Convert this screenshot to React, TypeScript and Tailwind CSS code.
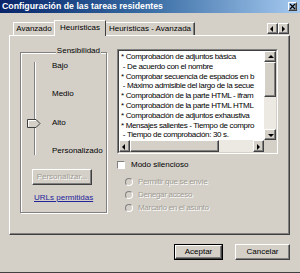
import React from 'react'

const listLines = [
  '* Comprobación de adjuntos básica',
  ' - De acuerdo con el nombre',
  '* Comprobar secuencia de espacios en b',
  ' - Máximo admisible del largo de la secue',
  '* Comprobación de la parte HTML - ifram',
  '* Comprobación de la parte HTML HTML',
  '* Comprobación de adjuntos exhaustiva',
  '* Mensajes salientes - Tiempo de compro',
  ' - Tiempo de comprobación: 30 s.',
]

const raised =
  'border border-t-white border-l-white border-r-[#404040] border-b-[#404040] shadow-[inset_-1px_-1px_0_#808080]'

function ArrowBtn({ dir, className = '' }: { dir: 'left' | 'right' | 'up' | 'down'; className?: string }) {
  const pts = {
    left: '5,2 5,8 2,5',
    right: '3,2 3,8 6,5',
    up: '2,6 8,6 5,3',
    down: '2,4 8,4 5,7',
  }[dir]
  return (
    <div className={`bg-[#d4d0c8] flex items-center justify-center ${raised} ${className}`}>
      <svg width="9" height="9" viewBox="0 0 9 9">
        <polygon points={pts} fill="#000" />
      </svg>
    </div>
  )
}

function Radio({ label }: { label: string }) {
  return (
    <div className="flex items-center gap-[5px] h-[13px]">
      <div className="w-[8px] h-[8px] rounded-full border border-t-[#808080] border-l-[#808080] border-r-white border-b-white bg-[#d4d0c8]" />
      <span className="text-[8px] tracking-[-0.3px] text-[#a09c94] [text-shadow:1px_1px_0_#fff]">{label}</span>
    </div>
  )
}

export default function App() {
  return (
    <div
      className="w-[300px] h-[273px] bg-[#d4d0c8] flex flex-col overflow-hidden text-black border-b border-b-[#404040]"
      style={{ fontFamily: '"Liberation Sans", Arial, sans-serif' }}
    >
      {/* title bar */}
      <div className="h-[13px] shrink-0 flex items-center justify-between pl-[2px] pr-[3px] bg-gradient-to-r from-[#0a246a] via-[#3a6ea5] to-[#a6caf0]">
        <span className="text-[8.75px] font-bold text-white leading-none">Configuración de las tareas residentes</span>
        <div className={`w-[9px] h-[9px] flex items-center justify-center ${raised}`}>
          <svg width="7" height="7" viewBox="0 0 7 7">
            <path d="M1 1 L6 6 M6 1 L1 6" stroke="#000" strokeWidth="1.2" />
          </svg>
        </div>
      </div>

      {/* tabs */}
      <div className="mt-[7px] h-[15px] flex items-end pl-[13px] pr-[11px] text-[8px]">
        <div className="h-[13px] px-[2px] w-[41px] flex items-center justify-center border-t border-l border-t-white border-l-white">
          Avanzado
        </div>
        <div className="relative z-10 -mb-[1px] h-[16px] w-[52px] flex items-center justify-center border-t border-l border-r border-t-white border-l-white border-r-[#404040] bg-[#d4d0c8] pb-[2px]">
          Heurísticas
        </div>
        <div className="h-[13px] w-[89px] flex items-center justify-center border-t border-r border-t-white border-r-[#404040] shadow-[inset_-1px_0_0_#808080]">
          Heurísticas - Avanzada
        </div>
        <div className="ml-auto mb-[1px] flex">
          <ArrowBtn dir="left" className="w-[11px] h-[11px]" />
          <ArrowBtn dir="right" className="w-[11px] h-[11px]" />
        </div>
      </div>

      {/* panel */}
      <div className="ml-[9px] w-[281px] h-[200px] shrink-0 flex border border-t-white border-l-white border-r-[#404040] border-b-[#404040] shadow-[inset_-1px_-1px_0_#808080] text-[8px]">
        {/* Sensibilidad group */}
        <div className="ml-[10px] mt-[16px] w-[87px] h-[161px] relative border border-[#808080] shadow-[1px_1px_0_#fff,inset_1px_1px_0_#fff] flex flex-col">
          <span className="absolute -top-[6px] right-[5px] px-[1px] bg-[#d4d0c8] leading-none">Sensibilidad</span>
          <div className="flex mt-[9px] h-[94px]">
            <div className="w-[31px] relative flex justify-center">
              <div className="w-[2px] h-[93px] ml-[-3px] border-l border-l-[#808080] border-r border-r-white" />
              <svg className="absolute left-[6px] top-[57px]" width="14" height="10" viewBox="0 0 14 10">
                <polygon points="0.5,0.5 9,0.5 13,4.5 9,8.5 0.5,8.5" fill="#d4d0c8" stroke="#404040" strokeWidth="1" />
                <polyline points="1.5,7.5 1.5,1.5 9,1.5" fill="none" stroke="#fff" strokeWidth="1" />
              </svg>
            </div>
            <div className="flex flex-col justify-between leading-[10px] -mt-[1px]">
              <span>Bajo</span>
              <span>Medio</span>
              <span>Alto</span>
              <span>Personalizado</span>
            </div>
          </div>
          <div
            className={`ml-[11px] mt-[13px] w-[60px] h-[16px] flex items-center justify-center text-[#a09c94] [text-shadow:1px_1px_0_#fff] ${raised}`}
          >
            Personalizar...
          </div>
          <span className="ml-[13px] mt-[9px] text-[#24249a] underline leading-none">URLs permitidas</span>
        </div>

        {/* right column */}
        <div className="ml-[10px] mt-[13px] flex flex-col">
          <div className="w-[161px] h-[105px] border border-t-[#808080] border-l-[#808080] border-r-white border-b-white">
            <div className="w-full h-full border border-t-[#404040] border-l-[#404040] border-r-[#d4d0c8] border-b-[#d4d0c8] bg-white flex flex-col">
              <div className="flex flex-1 min-h-0">
                <div className="flex-1 overflow-hidden pl-[2px] pt-[1px] whitespace-pre tracking-[-0.35px] leading-[9.8px]">
                  {listLines.map((l) => (
                    <div key={l}>{l}</div>
                  ))}
                </div>
                <div className="w-[12px] flex flex-col bg-[#ece9e2]">
                  <ArrowBtn dir="up" className="w-[12px] h-[11px]" />
                  <div className={`w-[12px] h-[35px] bg-[#d4d0c8] ${raised}`} />
                  <div className="flex-1" />
                  <ArrowBtn dir="down" className="w-[12px] h-[11px]" />
                </div>
              </div>
              <div className="h-[12px] flex bg-[#ece9e2]">
                <ArrowBtn dir="left" className="w-[11px] h-[12px]" />
                <div className={`w-[89px] h-[12px] bg-[#d4d0c8] ${raised}`} />
                <div className="flex-1" />
                <ArrowBtn dir="right" className="w-[11px] h-[12px]" />
                <div className="w-[12px] bg-[#d4d0c8]" />
              </div>
            </div>
          </div>

          <div className="mt-[5px] flex items-center gap-[6px] h-[12px]">
            <div className="w-[8px] h-[8px] bg-white border border-t-[#808080] border-l-[#808080] border-r-white border-b-white" />
            <span>Modo silencioso</span>
          </div>
          <div className="ml-[8px] mt-[4px] flex flex-col">
            <Radio label="Permitir que se envíe" />
            <Radio label="Denegar acceso" />
            <Radio label="Marcarlo en el asunto" />
          </div>
        </div>
      </div>

      {/* buttons */}
      <div className="mt-[9px] flex justify-end gap-[12px] pr-[10px] text-[8px]">
        <div className="w-[49px] h-[16px] border border-black">
          <div className={`w-full h-full flex items-center justify-center ${raised}`}>Aceptar</div>
        </div>
        <div className={`w-[55px] h-[16px] flex items-center justify-center ${raised}`}>Cancelar</div>
      </div>
    </div>
  )
}
